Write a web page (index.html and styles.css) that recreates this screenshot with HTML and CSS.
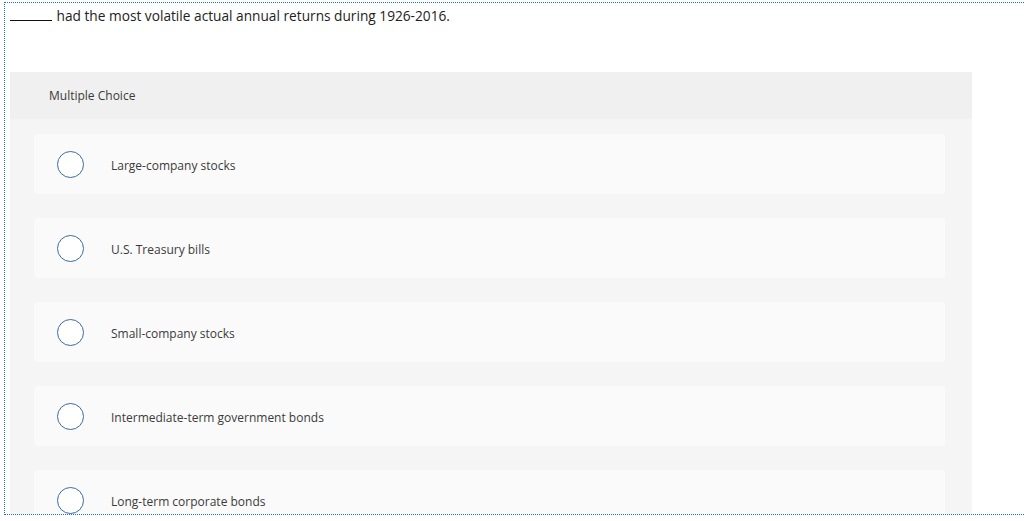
FILE: index.html
```html
<!DOCTYPE html>
<html lang="en">
<head>
  <meta charset="UTF-8">
  <title>Multiple Choice</title>
  <link rel="stylesheet" href="styles.css">
</head>
<body>
  <div class="frame">
    <p class="question"><span class="blank"></span> had the most volatile actual annual returns during 1926-2016.</p>

    <div class="panel">
      <div class="panel-head">Multiple Choice</div>
      <div class="choices">
        <label class="choice"><span class="radio"></span><span class="label">Large-company stocks</span></label>
        <label class="choice"><span class="radio"></span><span class="label">U.S. Treasury bills</span></label>
        <label class="choice"><span class="radio"></span><span class="label">Small-company stocks</span></label>
        <label class="choice"><span class="radio"></span><span class="label">Intermediate-term government bonds</span></label>
        <label class="choice"><span class="radio"></span><span class="label">Long-term corporate bonds</span></label>
      </div>
    </div>
  </div>
</body>
</html>
```

FILE: styles.css
```css
body {
  margin: 0;
  background: #fff;
  font-family: "Open Sans", Lato, Arial, sans-serif;
  color: #333;
  overflow: hidden;
}

.frame {
  margin: 2px 0 0 4px;
  width: 1060px;
  height: 511px;
  border: 1px dotted #1f6fd6;
  overflow: hidden;
}

.question {
  margin: 0;
  padding: 4px 0 0 5px;
  height: 21px;
  font-size: 13.7px;
  line-height: 18px;
  color: #222;
}

.blank {
  display: inline-block;
  width: 42px;
  border-bottom: 1px solid #111;
  margin-right: 1px;
}

.panel {
  margin: 44px 0 0 5px;
  width: 962px;
  background: #f5f5f5;
}

.panel-head {
  height: 47px;
  line-height: 48px;
  padding-left: 39px;
  background: #f0f0f0;
  font-size: 12px;
  color: #3a3a3a;
}

.choices {
  display: flex;
  flex-direction: column;
  gap: 24px;
  padding: 15px 27px 24px 24px;
}

.choice {
  display: flex;
  align-items: center;
  height: 60px;
  background: #fafafa;
  border-radius: 2px;
  padding-left: 23px;
}

.radio {
  box-sizing: border-box;
  width: 27px;
  height: 27px;
  border: 1.5px solid #3a6aa6;
  border-radius: 50%;
  background: #fff;
  margin-right: 27px;
}

.label {
  font-size: 12px;
  padding-top: 2px;
  color: #3a3a3a;
}
```
